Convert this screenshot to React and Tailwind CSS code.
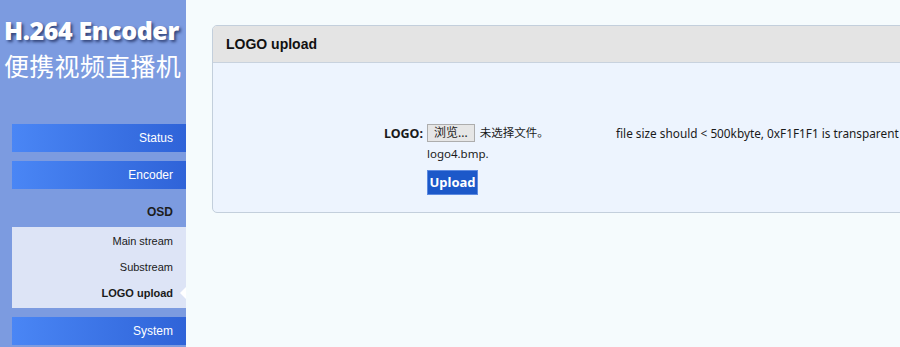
import React from 'react';

const sans = { fontFamily: 'Arial, "Liberation Sans", sans-serif' };

function NavButton({ label }) {
  return (
    <div className="ml-3 h-7 flex items-center justify-end pr-[13px] text-[12px] text-white bg-gradient-to-r from-[#4a86f5] to-[#2f63d8]">
      {label}
    </div>
  );
}

function Sidebar() {
  return (
    <aside className="w-[186px] shrink-0 bg-[#7c9be0] h-[347px]" style={sans}>
      <div className="pl-[4px] pt-[16px] h-[124px]">
        <div
          className="text-white font-extrabold text-[25px] leading-[28px] tracking-[-0.4px]"
          style={{ fontFamily: '"Open Sans", sans-serif', textShadow: '2px 2px 3px #33457a' }}
        >
          H.264 Encoder
        </div>
        <div
          className="mt-[6px] text-white text-[25px] leading-[30px] tracking-[0.3px]"
          style={{ fontFamily: '"Noto Sans CJK SC", sans-serif' }}
        >
          便携视频直播机
        </div>
      </div>
      <NavButton label="Status" />
      <div className="h-[9px]" />
      <NavButton label="Encoder" />
      <div className="h-[38px] flex items-center justify-end pr-[13px] pt-[8px] text-[12px] font-bold text-[#1d1d1d]">OSD</div>
      <div className="ml-3 bg-[#dde4f6] pt-[1px] pb-[2px] text-[11px] text-[#1a1a1a]">
        <div className="h-[26px] flex items-center justify-end pr-[13px]">Main stream</div>
        <div className="h-[27px] flex items-center justify-end pr-[13px]">Substream</div>
        <div className="relative h-[25px] flex items-center justify-end pr-[13px] font-bold">
          LOGO upload
          <span className="absolute right-0 top-[6px] w-0 h-0 border-y-[6px] border-y-transparent border-r-[6px] border-r-white" />
        </div>
      </div>
      <div className="h-[9px]" />
      <NavButton label="System" />
    </aside>
  );
}

export default function App() {
  return (
    <div className="flex w-[900px] h-[347px] overflow-hidden bg-[#f5fbfd]">
      <Sidebar />
      <main className="flex-1 min-w-0 pl-[26px] pt-[25px]">
        <div className="w-[720px] border border-[#c3cfdc] rounded-[5px] overflow-hidden bg-[#edf4fe]">
          <div className="h-[37px] bg-[#e4e4e4] border-b border-[#c8d2de] flex items-center pl-[13px] font-bold text-[14px] text-[#111]" style={sans}>
            LOGO upload
          </div>
          <div
            className="flex pt-[61px] pb-[17px] text-[11.5px] text-[#1a1a1a]"
            style={{ fontFamily: '"Noto Sans", "Noto Sans CJK SC", sans-serif' }}
          >
            <div className="w-[214px] shrink-0 text-right pr-[4px] font-bold text-[12.5px] leading-[17px] pt-[1px]">LOGO:</div>
            <div className="w-[189px] shrink-0 flex flex-col items-start">
              <div className="flex items-center">
                <span className="h-[18px] px-[6px] bg-[#e6e6e6] border border-[#adadad] text-[12px] leading-[16px] text-[#222]">浏览...</span>
                <span className="ml-[5px] text-[11.5px]">未选择文件。</span>
              </div>
              <div className="mt-[4px] leading-[16px]">logo4.bmp.</div>
              <button className="mt-[8px] w-[51px] h-[25px] bg-[#1c58c9] border border-[#5d8ae0] text-white font-bold text-[13px]">Upload</button>
            </div>
            <div className="shrink-0 whitespace-nowrap leading-[17px] pt-[1px] text-[11.8px]">file size should &lt; 500kbyte, 0xF1F1F1 is transparent color</div>
          </div>
        </div>
      </main>
    </div>
  );
}
